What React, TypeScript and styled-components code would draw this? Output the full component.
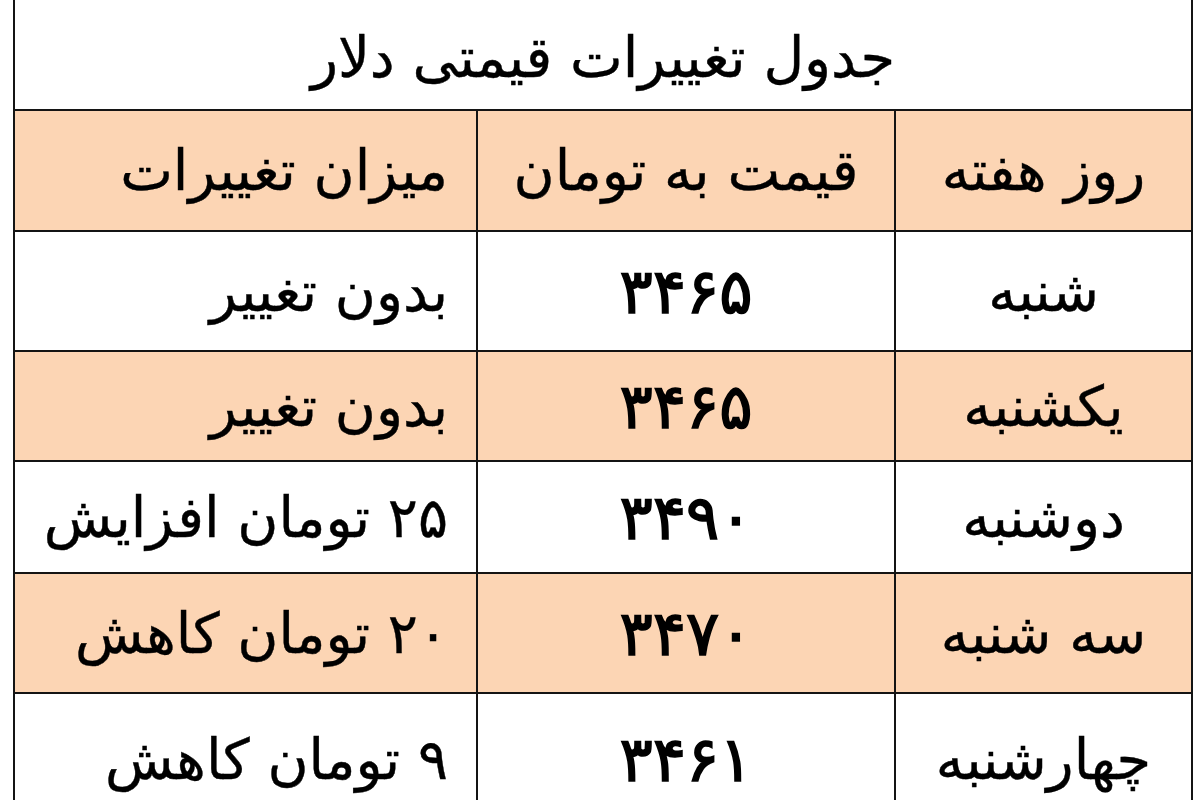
import React from "react";
import styled, { createGlobalStyle } from "styled-components";

const Global = createGlobalStyle`
  html, body { margin: 0; padding: 0; background: #ffffff; }
  body { overflow: hidden; }
`;

const Table = styled.div`
  margin-left: 13px;
  width: 1180px;
  box-sizing: border-box;
  padding: 0 2px;
  background: #141414;
  display: grid;
  direction: rtl;
  grid-template-columns: 295px 416px 461px;
  grid-template-rows: 109px 119px 118px 108px 110px 118px 130px;
  gap: 2px;
  font-family: "DejaVu Sans", "Noto Sans", sans-serif;
  color: #000;
`;

const Title = styled.div`
  grid-column: 1 / -1;
  background: #ffffff;
  display: flex;
  align-items: center;
  justify-content: center;
  font-size: 56px;
  padding-top: 6px;
  -webkit-text-stroke: 0.4px #000;
`;

const Cell = styled.div<{ $shaded?: boolean; $align?: "center" | "start"; $num?: boolean }>`
  background: ${(p) => (p.$shaded ? "#fcd5b4" : "#ffffff")};
  display: flex;
  align-items: center;
  justify-content: ${(p) => (p.$align === "start" ? "flex-start" : "center")};
  padding: ${(p) => (p.$align === "start" ? "0 28px 0 0" : "0")};
  font-size: ${(p) => (p.$num ? "62px" : "56px")};
  -webkit-text-stroke: ${(p) => (p.$num ? "1.6px" : "0.4px")} #000;
  white-space: nowrap;
`;

const rows = [
  { day: "شنبه", price: "۳۴۶۵", change: "بدون تغییر" },
  { day: "یکشنبه", price: "۳۴۶۵", change: "بدون تغییر" },
  { day: "دوشنبه", price: "۳۴۹۰", change: "۲۵ تومان افزایش" },
  { day: "سه شنبه", price: "۳۴۷۰", change: "۲۰ تومان کاهش" },
  { day: "چهارشنبه", price: "۳۴۶۱", change: "۹ تومان کاهش" },
];

export default function App() {
  return (
    <>
      <Global />
      <Table>
        <Title>جدول تغییرات قیمتی دلار</Title>
        <Cell $shaded>روز هفته</Cell>
        <Cell $shaded>قیمت به تومان</Cell>
        <Cell $shaded $align="start">میزان تغییرات</Cell>
        {rows.map((r, i) => {
          const shaded = i % 2 === 1;
          return (
            <React.Fragment key={i}>
              <Cell $shaded={shaded}>{r.day}</Cell>
              <Cell $shaded={shaded} $num>{r.price}</Cell>
              <Cell $shaded={shaded} $align="start">{r.change}</Cell>
            </React.Fragment>
          );
        })}
      </Table>
    </>
  );
}
